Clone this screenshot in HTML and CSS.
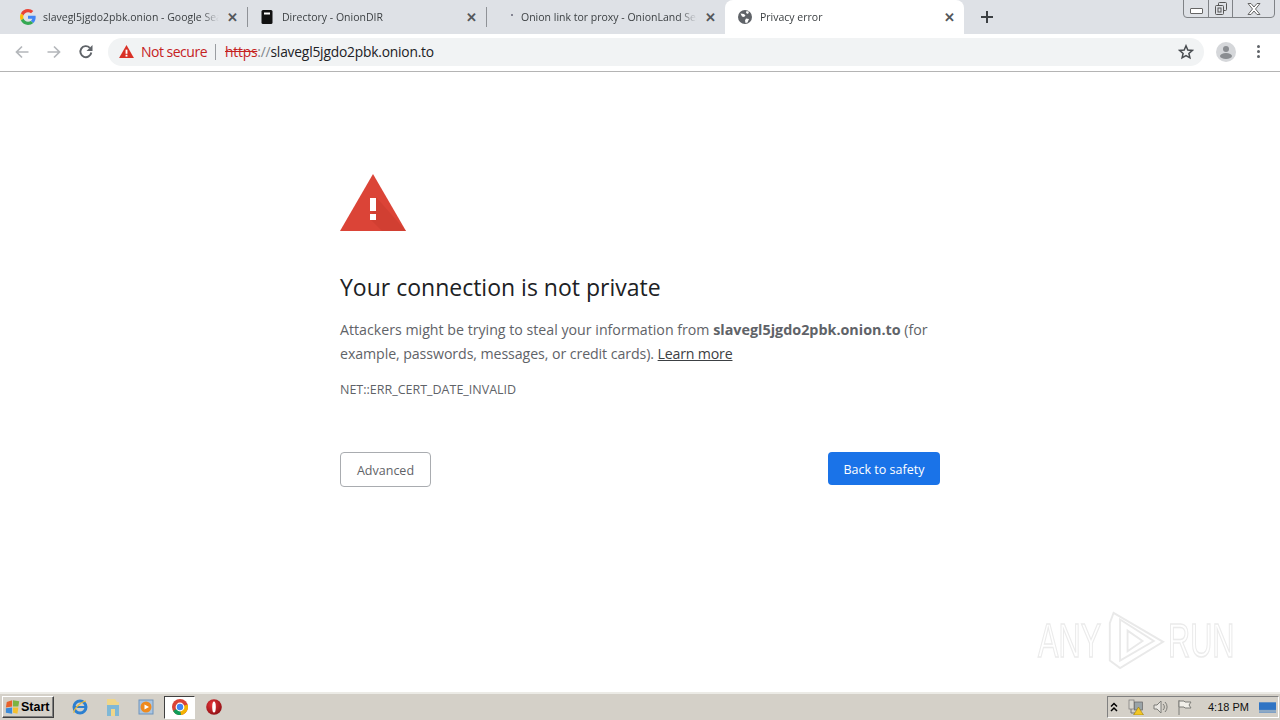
FILE: index.html
```html
<!DOCTYPE html>
<html lang="en">
<head>
    <meta charset="UTF-8">
    <title>Privacy error</title>
    <link rel="stylesheet" href="styles.css">
</head>
<body>
    <div class="tab-strip">
        <div class="tab">
            <svg class="tab-icon" viewBox="0 0 48 48"><path fill="#ea4335" d="M24 9.500c3.500 0 6.700 1.300 9.100 3.500l6.800-6.800C35.800 2.400 30.200 0 24 0 14.600 0 6.500 5.400 2.600 13.200l7.900 6.100C12.400 13.600 17.700 9.500 24 9.500z"/><path fill="#4285f4" d="M47 24.500c0-1.600-.1-3.100-.4-4.500H24v9h12.900c-.6 3-2.200 5.500-4.700 7.200l7.700 6C44.400 38 47 31.800 47 24.500z"/><path fill="#fbbc05" d="M10.500 28.700c-.5-1.400-.8-3-.8-4.700s.3-3.300.8-4.700l-7.900-6.100C.9 16.500 0 20.100 0 24s.9 7.500 2.600 10.800l7.900-6.100z"/><path fill="#34a853" d="M24 48c6.500 0 11.900-2.100 15.900-5.800l-7.700-6c-2.200 1.400-4.900 2.300-8.200 2.300-6.300 0-11.600-4.100-13.500-9.800l-7.900 6.100C6.500 42.600 14.600 48 24 48z"/></svg>
            <span class="tab-title">slavegl5jgdo2pbk.onion - Google Sea</span>
            <span class="tab-close">✕</span>
        </div>
        <span class="tab-sep"></span>
        <div class="tab">
            <svg class="tab-icon" viewBox="0 0 16 16"><rect x="2.500" y="1" width="11" height="14" rx="1.500" fill="#111"/><rect x="5" y="3.500" width="6" height="2" fill="#fff"/></svg>
            <span class="tab-title">Directory - OnionDIR</span>
            <span class="tab-close">✕</span>
        </div>
        <span class="tab-sep"></span>
        <div class="tab">
            <svg class="tab-icon" viewBox="0 0 16 16"><circle cx="14" cy="6" r="1" fill="#667"/></svg>
            <span class="tab-title">Onion link tor proxy - OnionLand Sea</span>
            <span class="tab-close">✕</span>
        </div>
        <div class="tab tab-active">
            <svg class="tab-icon" viewBox="0 0 16 16"><circle cx="8" cy="8" r="7" fill="#5f6368"/><path fill="#fff" d="M3.500 4.500 7 5l1.500 1.500L7 8 5 7.500zM9 9.500l3 .5-1.500 3.500-2 .5-.5-2.500zM9.500 2l2.500.8L11 5 9 4z"/></svg>
            <span class="tab-title">Privacy error</span>
            <span class="tab-close">✕</span>
        </div>
        <svg class="new-tab" viewBox="0 0 14 14"><path d="M7 1v12M1 7h12" stroke="#3c4043" stroke-width="2" fill="none"/></svg>
        <div class="window-controls">
            <div class="win-btn"><span class="win-min"></span></div>
            <div class="win-btn win-btn-mid">
                <svg width="14" height="13" viewBox="0 0 14 13" fill="none" stroke="#555"><rect x="4.500" y="0.500" width="8" height="8" rx="1"/><rect x="1.500" y="3.500" width="8" height="9" rx="1" fill="#dee1e6"/><rect x="4" y="6" width="3" height="4"/></svg>
            </div>
            <div class="win-btn win-btn-close">
                <svg width="14" height="12" viewBox="0 0 14 12" fill="#fff" stroke="#666"><path d="M1 .5h3L7 4l3-3.500h3L8.500 6l4.500 5.500h-3L7 8l-3 3.500H1L5.500 6z"/></svg>
            </div>
        </div>
    </div>

    <div class="toolbar">
        <svg class="tool-icon" viewBox="0 0 16 16"><path d="M14.500 8H2.500M8 2.500 2.500 8 8 13.500" stroke="#b4b7bb" stroke-width="1.700" fill="none"/></svg>
        <svg class="tool-icon" viewBox="0 0 16 16"><path d="M1.500 8h12M8 2.500 13.500 8 8 13.500" stroke="#b4b7bb" stroke-width="1.700" fill="none"/></svg>
        <svg class="tool-icon" viewBox="0 0 16 16"><path d="M13.300 8.500A5.500 5.500 0 1 1 11.800 3.800" stroke="#5f6368" stroke-width="1.900" fill="none"/><path d="M14.500 1v6h-6z" fill="#5f6368"/></svg>
        <div class="omnibox">
            <svg class="warn-small" viewBox="0 0 16 14"><path d="M8 0 16 14H0z" fill="#d93025"/><rect x="7" y="5" width="2" height="4.500" fill="#fff"/><rect x="7" y="10.500" width="2" height="2" fill="#fff"/></svg>
            <span class="not-secure">Not secure</span>
            <span class="omni-sep"></span>
            <span class="url"><span class="url-scheme">https</span><span class="url-slashes">://</span>slavegl5jgdo2pbk.onion.to</span>
            <svg class="star" viewBox="0 0 16 16"><path d="M8 1.800 9.800 6l4.500.4-3.400 3 1 4.400L8 11.500l-3.900 2.300 1-4.400-3.400-3L6.200 6z" fill="none" stroke="#484c50" stroke-width="1.500"/></svg>
        </div>
        <svg class="avatar" viewBox="0 0 20 20"><circle cx="10" cy="10" r="10" fill="#d5d7da"/><circle cx="10" cy="7" r="3" fill="#8a8d91"/><ellipse cx="10" cy="14" rx="6" ry="3" fill="#8a8d91"/></svg>
        <div class="menu-dots"><span></span><span></span><span></span></div>
    </div>

    <div class="page">
        <div class="interstitial">
            <svg class="warn-big" viewBox="0 0 66 57">
                <path d="M33 0 66 57H0z" fill="#db4437"/>
                <path d="M36 23 66 57H42L31 46z" fill="#c8392d" opacity="0.5"/>
                <rect x="30" y="24" width="6" height="13" fill="#fff"/>
                <rect x="30" y="40" width="6" height="6" fill="#fff"/>
            </svg>
            <h1>Your connection is not private</h1>
            <p class="message">Attackers might be trying to steal your information from <strong>slavegl5jgdo2pbk.onion.to</strong> (for <span class="message-tail">example, passwords, messages, or credit cards).</span> <a href="#">Learn more</a></p>
            <div class="error-code">NET::ERR_CERT_DATE_INVALID</div>
            <div class="button-row">
                <button class="btn-advanced">Advanced</button>
                <button class="btn-safety">Back to safety</button>
            </div>
        </div>
        <div class="watermark">
            <span>ANY</span>
            <svg width="58" height="64" viewBox="0 0 62 64" fill="none" stroke="#e9e9e9" stroke-width="2"><path d="M7 3 60 34 14 62 3 54V14z"/><path d="M14 10 50 33 14 54z"/><path d="M22 22 38 33 22 44z"/></svg>
            <span>RUN</span>
        </div>
    </div>

    <div class="taskbar">
        <button class="start-btn">
            <svg width="16" height="16" viewBox="0 0 18 17"><path d="M2 3 8 1v7L1 9z" fill="#e8622c"/><path d="M9 1l7 1-1 6-6 0z" fill="#7cb342"/><path d="M1 10l7-1v7l-7-1z" fill="#3b8ad9"/><path d="M9 9h6l-1 7-5-1z" fill="#f5c02e"/></svg>
            Start
        </button>
        <svg class="quick-icon ql-ie" viewBox="0 0 16 16"><circle cx="8" cy="8" r="6" fill="none" stroke="#2b7fd0" stroke-width="3"/><path d="M3 8h10" stroke="#2b7fd0" stroke-width="2"/><path d="M2 14C1 11 8 3 14 2" stroke="#e9b93a" stroke-width="1.200" fill="none"/></svg>
        <svg class="quick-icon ql-folder" viewBox="0 0 16 18"><path d="M2 1h8l2 3h2v14H2z" fill="#efd68a"/><rect x="2" y="7" width="12" height="11" fill="#7fb8d6"/><rect x="6" y="11" width="4" height="7" fill="#efd68a"/></svg>
        <svg class="quick-icon ql-media" viewBox="0 0 16 16"><rect x="1" y="1" width="14" height="14" fill="#a9c5e2" stroke="#6f93bb"/><circle cx="8" cy="8" r="5.500" fill="#ef8a1e"/><path d="M6.500 5.500 11 8l-4.500 2.500z" fill="#fff"/></svg>
        <div class="task-active">
            <svg width="16" height="16" viewBox="0 0 16 16"><circle cx="8" cy="8" r="8" fill="#db4437"/><path d="M8 8 1 12a8 8 0 0 0 8 4z" fill="#0f9d58"/><path d="M8 8l7.500-2.500A8 8 0 0 1 9 16z" fill="#f4b400"/><circle cx="8" cy="8" r="3.800" fill="#4285f4" stroke="#fff" stroke-width="1.200"/></svg>
        </div>
        <svg class="quick-icon ql-opera" viewBox="0 0 16 16">
            <defs><radialGradient id="opera-red" cx="0.4" cy="0.35" r="0.7"><stop offset="0" stop-color="#e8353a"/><stop offset="1" stop-color="#8e0f14"/></radialGradient></defs>
            <circle cx="8" cy="8" r="7.800" fill="url(#opera-red)"/><ellipse cx="8" cy="8" rx="1.800" ry="5.500" fill="#fff"/>
        </svg>
        <div class="tray">
            <svg class="tray-up" viewBox="0 0 8 10" fill="none" stroke="#000" stroke-width="1.500"><path d="M1 4.500 4 1.500l3 3M1 9 4 6l3 3"/></svg>
            <svg class="tray-icon" viewBox="0 0 16 16"><rect x="1" y="1" width="5" height="9" fill="#dad8d0" stroke="#777" stroke-width="0.700"/><rect x="6.500" y="3" width="8" height="8" fill="#9aa4a8" stroke="#666" stroke-width="0.700"/><path d="M3 10v4h4" stroke="#777" fill="none"/><path d="M10.500 8l5 8h-10z" fill="#f2c624" stroke="#8a6d00" stroke-width="0.500"/></svg>
            <svg class="tray-icon" viewBox="0 0 16 16" fill="none" stroke="#7d7d78"><path d="M2 6h3l4-4v12l-4-4H2z" fill="#e9e7e2"/><path d="M11 5a4 4 0 0 1 0 6M13 3a7 7 0 0 1 0 10"/></svg>
            <svg class="tray-icon" viewBox="0 0 16 16" fill="none" stroke="#7d7d78"><path d="M3 1v15"/><path d="M3 2h5l1 1h6l-2 3 2 3H9L8 8H3z" fill="#f1efe9"/></svg>
            <span class="clock">4:18 PM</span>
            <svg class="show-desktop" viewBox="0 0 18 11"><rect width="18" height="11" fill="#2f74c4"/><rect y="8" width="18" height="3" fill="#8ea9c4"/></svg>
        </div>
    </div>
</body>
</html>
```

FILE: styles.css
```css
html, body {
    height: 100%;
}
body {
    display: flex;
    flex-direction: column;
    height: 720px;
    margin: 0;
    overflow: hidden;
    font-family: "Open Sans", "Noto Sans", sans-serif;
    background-color: white;
}

/* tabs */
.tab-strip {
    position: relative;
    display: flex;
    align-items: center;
    height: 34px;
    padding-left: 8px;
    background-color: #dee1e6;
    flex-shrink: 0;
}
.tab {
    display: flex;
    align-items: center;
    box-sizing: border-box;
    width: 239px;
    height: 34px;
    padding: 0 8px 0 12px;
}
.tab-sep {
    width: 1px;
    height: 20px;
    margin-right: -1px;
    background-color: #8f9297;
}
.tab-active {
    background-color: white;
    border-radius: 8px 8px 0 0;
}
.tab-icon {
    width: 16px;
    height: 16px;
    flex-shrink: 0;
    margin-right: 7px;
}
.tab-title {
    flex: 1;
    min-width: 0;
    white-space: nowrap;
    font-size: 10.5px;
    color: #3c4043;
    -webkit-mask-image: linear-gradient(to right, black 90%, transparent);
    mask-image: linear-gradient(to right, black 90%, transparent);
}
.tab-close {
    width: 14px;
    margin-left: 6px;
    text-align: center;
    font-size: 13px;
    font-weight: bold;
    color: #54575b;
}
.new-tab {
    width: 14px;
    height: 14px;
    margin-left: 16px;
}
.window-controls {
    position: absolute;
    top: -1px;
    right: 5px;
    display: flex;
    height: 17px;
    border: 1px solid #7f8286;
    border-radius: 0 0 4px 4px;
}
.win-btn {
    display: flex;
    align-items: center;
    justify-content: center;
    width: 24px;
}
.win-btn-mid {
    width: 23px;
    border-left: 1px solid #7f8286;
    border-right: 1px solid #7f8286;
}
.win-btn-close {
    width: 41px;
}
.win-min {
    display: block;
    width: 11px;
    height: 4px;
    margin-top: 4px;
    background-color: white;
    border: 1px solid #666;
    border-radius: 1px;
}

/* toolbar */
.toolbar {
    display: flex;
    align-items: center;
    box-sizing: border-box;
    height: 38px;
    padding: 0 0 2px 14px;
    background-color: white;
    border-bottom: 1px solid #b4b4b4;
    flex-shrink: 0;
}
.tool-icon {
    width: 16px;
    height: 16px;
    margin-right: 16px;
}
.omnibox {
    display: flex;
    align-items: center;
    width: 1096px;
    height: 28px;
    margin-left: -2px;
    padding-left: 11px;
    box-sizing: border-box;
    border-radius: 14px;
    background-color: #f1f3f4;
}
.warn-small {
    width: 15px;
    height: 13px;
    margin-right: 7px;
}
.not-secure {
    font-size: 14px;
    letter-spacing: -0.5px;
    color: #c5221f;
}
.omni-sep {
    width: 1px;
    height: 16px;
    margin: 0 8px;
    background-color: #9a9da1;
}
.url {
    flex: 1;
    margin-left: 1px;
    font-size: 13.8px;
    letter-spacing: -0.2px;
    color: #202124;
}
.url-scheme {
    color: #c5221f;
    text-decoration: line-through;
}
.url-slashes {
    color: #80868b;
}
.star {
    width: 16px;
    height: 16px;
    margin-right: 10px;
}
.avatar {
    width: 20px;
    height: 20px;
    margin-left: 12px;
}
.menu-dots {
    display: flex;
    flex-direction: column;
    gap: 2px;
    margin-left: 21px;
}
.menu-dots span {
    display: block;
    width: 3px;
    height: 3px;
    background-color: #5f6368;
    border-radius: 50%;
}

/* interstitial */
.page {
    position: relative;
    flex: 1;
}
.interstitial {
    width: 600px;
    padding-top: 102px;
    margin-left: 340px;
}
.warn-big {
    display: block;
    width: 66px;
    height: 57px;
}
h1 {
    margin: 38px 0 0;
    font-size: 23px;
    font-weight: normal;
    line-height: 36px;
    color: #202124;
}
.message {
    margin: 13px 0 0;
    font-size: 14.2px;
    line-height: 24px;
    color: #5f6368;
}
.message strong {
    font-size: 14.35px;
    font-weight: bold;
}
.message-tail {
    letter-spacing: -0.085px;
}
.message a {
    letter-spacing: -0.2px;
    color: #3c4043;
    text-decoration: underline;
}
.error-code {
    margin-top: 16px;
    font-size: 12.5px;
    line-height: 16px;
    color: #5f6368;
}
.button-row {
    display: flex;
    justify-content: space-between;
    align-items: flex-start;
    margin-top: 54px;
}
button {
    font-family: "Open Sans", "Noto Sans", sans-serif;
    padding: 2px 0 0;
}
.btn-advanced {
    width: 91px;
    height: 35px;
    font-size: 12.5px;
    color: #5f6368;
    background-color: white;
    border: 1px solid #a9acb0;
    border-radius: 4px;
}
.btn-safety {
    width: 112px;
    height: 33px;
    font-size: 12.5px;
    color: white;
    background-color: #1a73e8;
    border: none;
    border-radius: 4px;
}
.watermark {
    position: absolute;
    left: 1038px;
    top: 536px;
    display: flex;
    align-items: center;
    gap: 3px;
    font-family: "Liberation Sans", sans-serif;
    font-size: 48px;
    color: white;
    -webkit-text-stroke: 1.5px #ebebeb;
}
.watermark span {
    display: inline-block;
    width: 66px;
    transform: scaleX(0.64);
    transform-origin: left center;
    white-space: nowrap;
}

/* taskbar */
.taskbar {
    display: flex;
    align-items: center;
    box-sizing: border-box;
    height: 28px;
    padding-left: 2px;
    background-color: #d4d0c8;
    border-top: 2px solid #ecebe6;
    flex-shrink: 0;
}
.start-btn {
    display: flex;
    align-items: center;
    gap: 0;
    box-sizing: border-box;
    width: 52px;
    height: 22px;
    padding: 0 0 0 2px;
    font-family: "Liberation Sans", sans-serif;
    font-size: 12.5px;
    font-weight: bold;
    color: black;
    background-color: #d4d0c8;
    border: 1px solid;
    border-color: #fff #404040 #404040 #fff;
    box-shadow: inset -1px -1px 0 #808080;
}
.quick-icon {
    width: 16px;
    height: 16px;
}
.ql-ie {
    margin-left: 18px;
}
.ql-folder {
    height: 18px;
    margin-left: 17px;
}
.ql-media {
    margin-left: 17px;
}
.task-active {
    display: flex;
    align-items: center;
    justify-content: center;
    box-sizing: border-box;
    width: 31px;
    height: 23px;
    margin-left: 10px;
    background-color: white;
    border: 1px solid;
    border-color: #404040 #fff #fff #404040;
}
.ql-opera {
    margin-left: 11px;
}
.tray {
    display: flex;
    align-items: center;
    box-sizing: border-box;
    height: 22px;
    margin-left: auto;
    margin-right: 1px;
    padding-left: 2px;
    width: 172px;
    border: 1px solid;
    border-color: #808080 #fff #fff #808080;
}
.tray-up {
    flex-shrink: 0;
    width: 8px;
    height: 10px;
    margin-right: 2px;
}
.tray-icon {
    flex-shrink: 0;
    width: 16px;
    height: 16px;
    margin-left: 8px;
}
.clock {
    width: 40px;
    margin-left: 16px;
    font-family: "Liberation Sans", sans-serif;
    font-size: 11px;
    color: #111;
    white-space: nowrap;
}
.show-desktop {
    flex-shrink: 0;
    width: 17px;
    height: 11px;
    margin-left: 11px;
}
```
